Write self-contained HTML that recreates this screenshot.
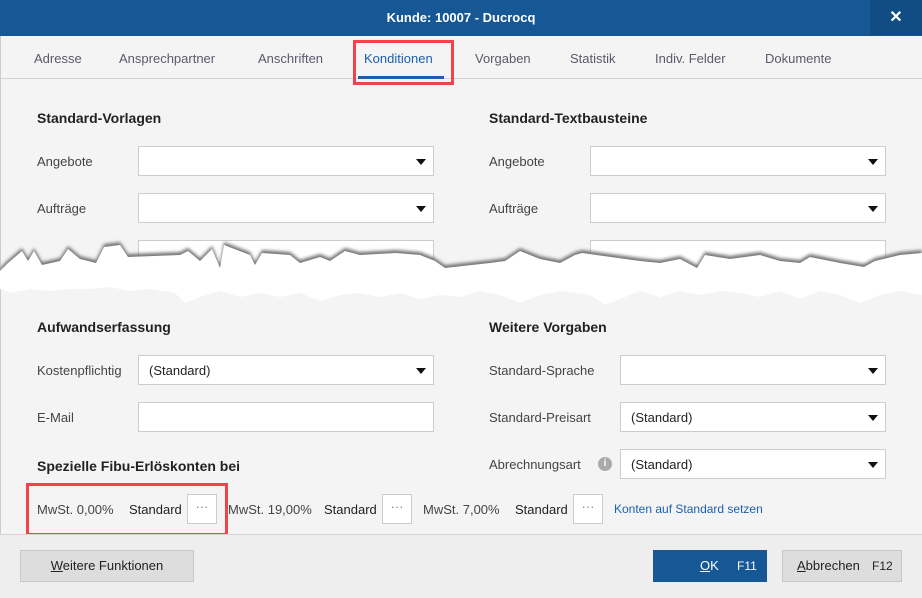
<!DOCTYPE html>
<html><head><style>
*{margin:0;padding:0;box-sizing:border-box}
body{width:922px;height:598px;position:relative;background:#f4f4f4;font-family:"Liberation Sans",sans-serif;font-size:13px;color:#333;overflow:hidden}
.a{position:absolute;white-space:nowrap}
.title{left:0;top:0;width:922px;height:36px;background:#165896;color:#fff;font-weight:bold;text-align:center;line-height:36px;font-size:13px}
.x{left:870px;top:0;width:52px;height:35px;background:#114c85;color:#fff;text-align:center;line-height:35px;font-size:16px;font-weight:bold}
.tab{top:51px;color:#5a5a6a;font-size:13px}
.h{font-size:14px;font-weight:bold;color:#222}
.lbl{color:#444;font-size:13px}
.in{background:#fff;border:1px solid #ccc;height:30px}
.dd::after{content:"";position:absolute;right:7px;top:12px;border-left:5px solid transparent;border-right:5px solid transparent;border-top:6px solid #111}
.in span{position:absolute;left:10px;top:7px;color:#222}
.btn3{width:30px;height:30px;background:#fff;border:1px solid #ccc;text-align:center;line-height:24px;color:#888}
.red{border:3px solid #f0434a}
</style></head><body>
<div class="a title">Kunde: 10007 - Ducrocq</div>
<div class="a x">✕</div>
<div class="a" style="left:0;top:36px;width:1px;height:500px;background:#ccc"></div>
<div class="a" style="left:0;top:78px;width:922px;height:1px;background:#d2d2d2"></div>
<div class="a tab" style="left:34px">Adresse</div>
<div class="a tab" style="left:119px">Ansprechpartner</div>
<div class="a tab" style="left:258px">Anschriften</div>
<div class="a tab" style="left:364px;color:#1b5fb0">Konditionen</div>
<div class="a" style="left:358px;top:76px;width:86px;height:3px;background:#1b5fb0"></div>
<div class="a red" style="left:353px;top:40px;width:101px;height:45px"></div>
<div class="a tab" style="left:475px">Vorgaben</div>
<div class="a tab" style="left:570px">Statistik</div>
<div class="a tab" style="left:655px">Indiv. Felder</div>
<div class="a tab" style="left:765px">Dokumente</div>

<div class="a h" style="left:37px;top:110px">Standard-Vorlagen</div>
<div class="a h" style="left:489px;top:110px">Standard-Textbausteine</div>
<div class="a lbl" style="left:37px;top:154px">Angebote</div>
<div class="a lbl" style="left:37px;top:201px">Aufträge</div>
<div class="a in dd" style="left:138px;top:146px;width:296px"></div>
<div class="a in dd" style="left:138px;top:193px;width:296px"></div>
<div class="a lbl" style="left:489px;top:154px">Angebote</div>
<div class="a lbl" style="left:489px;top:201px">Aufträge</div>
<div class="a in dd" style="left:590px;top:146px;width:296px"></div>
<div class="a in dd" style="left:590px;top:193px;width:296px"></div>
<div class="a in" style="left:138px;top:240px;width:296px"></div>
<div class="a in" style="left:590px;top:240px;width:296px"></div>

<svg class="a" style="left:0;top:230px" width="922" height="80" viewBox="0 0 922 80">
<defs><filter id="s" x="-5%" y="-50%" width="110%" height="200%"><feGaussianBlur stdDeviation="1.5"/></filter></defs>
<path d="M0,38 L8,30 L22,18 L28,28 L34,18 L42,32 L60,28 L68,16 L80,26 L96,30 L104,14 L120,12 L128,24 L180,22 L188,18 L200,28 L212,16 L220,35 L224,12 L250,22 L255,32 L262,20 L290,22 L300,30 L320,24 L330,28 L345,18 L360,22 L396,20 L420,22 L435,28 L445,35 L490,30 L505,28 L520,18 L540,26 L560,30 L575,22 L582,20 L640,28 L660,30 L680,26 L697,35 L705,22 L730,26 L760,22 L780,28 L800,30 L810,24 L840,30 L864,34 L875,28 L900,22 L922,20 L922,40 L0,50 Z" fill="#777" filter="url(#s)"/>
<path d="M0,38 L8,30 L22,18 L28,28 L34,18 L42,32 L60,28 L68,16 L80,26 L96,30 L104,14 L120,12 L128,24 L180,22 L188,18 L200,28 L212,16 L220,35 L224,12 L250,22 L255,32 L262,20 L290,22 L300,30 L320,24 L330,28 L345,18 L360,22 L396,20 L420,22 L435,28 L445,35 L490,30 L505,28 L520,18 L540,26 L560,30 L575,22 L582,20 L640,28 L660,30 L680,26 L697,35 L705,22 L730,26 L760,22 L780,28 L800,30 L810,24 L840,30 L864,34 L875,28 L900,22 L922,20 L922,62 L900,58 L880,62 L860,70 L840,62 L820,58 L800,66 L780,58 L760,64 L740,60 L720,58 L700,62 L680,58 L660,64 L640,58 L620,66 L605,72 L590,62 L560,58 L540,62 L520,70 L500,62 L480,58 L460,64 L440,62 L420,66 L400,60 L380,64 L360,60 L340,62 L320,68 L300,60 L280,64 L260,60 L240,64 L220,58 L200,64 L185,70 L175,60 L150,56 L130,58 L110,54 L90,56 L70,56 L50,58 L30,56 L10,60 L0,56 Z" fill="#fff" transform="translate(0,3)"/>
</svg>

<div class="a h" style="left:37px;top:319px">Aufwandserfassung</div>
<div class="a h" style="left:489px;top:319px">Weitere Vorgaben</div>
<div class="a lbl" style="left:37px;top:363px">Kostenpflichtig</div>
<div class="a in dd" style="left:138px;top:355px;width:296px"><span>(Standard)</span></div>
<div class="a lbl" style="left:37px;top:410px">E-Mail</div>
<div class="a in" style="left:138px;top:402px;width:296px"></div>
<div class="a h" style="left:37px;top:458px">Spezielle Fibu-Erlöskonten bei</div>
<div class="a lbl" style="left:489px;top:363px">Standard-Sprache</div>
<div class="a in dd" style="left:620px;top:355px;width:266px"></div>
<div class="a lbl" style="left:489px;top:410px">Standard-Preisart</div>
<div class="a in dd" style="left:620px;top:402px;width:266px"><span>(Standard)</span></div>
<div class="a lbl" style="left:489px;top:457px">Abrechnungsart</div>
<div class="a" style="left:598px;top:457px;width:14px;height:14px;border-radius:50%;background:#aaa;color:#fff;font-size:10px;font-weight:bold;text-align:center;line-height:14px">i</div>
<div class="a in dd" style="left:620px;top:449px;width:266px"><span>(Standard)</span></div>

<div class="a lbl" style="left:37px;top:502px">MwSt. 0,00%</div>
<div class="a" style="left:129px;top:502px;color:#222">Standard</div>
<div class="a btn3" style="left:187px;top:494px">···</div>
<div class="a lbl" style="left:228px;top:502px">MwSt. 19,00%</div>
<div class="a" style="left:324px;top:502px;color:#222">Standard</div>
<div class="a btn3" style="left:382px;top:494px">···</div>
<div class="a lbl" style="left:423px;top:502px">MwSt. 7,00%</div>
<div class="a" style="left:515px;top:502px;color:#222">Standard</div>
<div class="a btn3" style="left:573px;top:494px">···</div>
<div class="a" style="left:614px;top:502px;color:#1b5fb0;font-size:12px">Konten auf Standard setzen</div>
<div class="a red" style="left:26px;top:483px;width:202px;height:53px"></div>

<div class="a" style="left:0;top:534px;width:922px;height:64px;background:#eeeeee;border-top:1px solid #d4d4d4"></div>
<div class="a" style="left:20px;top:550px;width:174px;height:32px;background:#dddddd;border:1px solid #c8c8c8;text-align:center;line-height:30px;color:#222"><u>W</u>eitere Funktionen</div>
<div class="a" style="left:653px;top:550px;width:114px;height:32px;background:#165896;color:#fff;line-height:32px"><span class="a" style="left:47px"><u>O</u>K</span><span class="a" style="left:84px;font-size:12px">F11</span></div>
<div class="a" style="left:782px;top:550px;width:120px;height:32px;background:#dddddd;border:1px solid #c8c8c8;line-height:30px;color:#222"><span class="a" style="left:14px"><u>A</u>bbrechen</span><span class="a" style="left:89px;font-size:12px">F12</span></div>
</body></html>
